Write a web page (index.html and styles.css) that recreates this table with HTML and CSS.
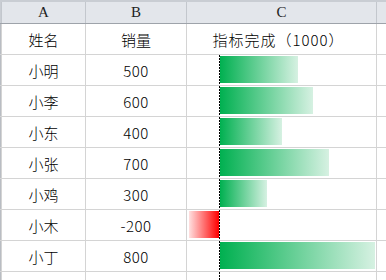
FILE: index.html
```html
<!DOCTYPE html>
<html lang="zh">
<head>
<meta charset="utf-8">
<link rel="stylesheet" href="styles.css">
</head>
<body>
<div class="sheet">
  <div class="colhead">
    <div class="edge"></div>
    <div class="hc">A</div>
    <div class="hc">B</div>
    <div class="hc">C</div>
    <div class="hc"></div>
  </div>
  <div class="grid">
    <div class="edge"></div><div class="cell name">姓名</div><div class="cell name">销量</div><div class="cell name title">指标完成（1000）</div><div class="cell"></div>

    <div class="edge"></div><div class="cell name">小明</div><div class="cell num">500</div>
    <div class="cell bars"><div class="neg"></div><div class="axis"></div><div class="pos"><div class="bar" style="width:78px"></div></div></div><div class="cell"></div>

    <div class="edge"></div><div class="cell name">小李</div><div class="cell num">600</div>
    <div class="cell bars"><div class="neg"></div><div class="axis"></div><div class="pos"><div class="bar" style="width:93px"></div></div></div><div class="cell"></div>

    <div class="edge"></div><div class="cell name">小东</div><div class="cell num">400</div>
    <div class="cell bars"><div class="neg"></div><div class="axis"></div><div class="pos"><div class="bar" style="width:62px"></div></div></div><div class="cell"></div>

    <div class="edge"></div><div class="cell name">小张</div><div class="cell num">700</div>
    <div class="cell bars"><div class="neg"></div><div class="axis"></div><div class="pos"><div class="bar" style="width:109px"></div></div></div><div class="cell"></div>

    <div class="edge"></div><div class="cell name">小鸡</div><div class="cell num">300</div>
    <div class="cell bars"><div class="neg"></div><div class="axis"></div><div class="pos"><div class="bar" style="width:47px"></div></div></div><div class="cell"></div>

    <div class="edge"></div><div class="cell name">小木</div><div class="cell num">-200</div>
    <div class="cell bars"><div class="neg"><div class="bar red" style="width:30px"></div></div><div class="axis"></div><div class="pos"></div></div><div class="cell"></div>

    <div class="edge"></div><div class="cell name">小丁</div><div class="cell num">800</div>
    <div class="cell bars"><div class="neg"></div><div class="axis"></div><div class="pos"><div class="bar" style="width:155px"></div></div></div><div class="cell"></div>

    <div class="edge"></div><div class="cell"></div><div class="cell"></div>
    <div class="cell bars"><div class="neg"></div><div class="axis"></div><div class="pos"></div></div><div class="cell"></div>
  </div>
</div>
</body>
</html>
```
FILE: styles.css
```css
html, body {
  margin: 0;
  padding: 0;
  background: #ffffff;
}
.sheet {
  width: 386px;
  height: 280px;
  overflow: hidden;
  font-family: "Noto Sans CJK SC", "DejaVu Sans", sans-serif;
  font-weight: 300;
  color: #000;
}
.colhead {
  display: grid;
  grid-template-columns: 1px 83px 100px 189px 9px;
  grid-template-rows: 21px;
  column-gap: 1px;
  background: #c3c7cd;
  border-top: 2px solid #c9cdd3;
  border-bottom: 1px solid #9ea3aa;
}
.colhead .edge {
  background: #c9cdd3;
}
.hc {
  background: #e3e6eb;
  font-family: "Liberation Serif", serif;
  font-weight: 400;
  font-size: 15px;
  line-height: 21px;
  text-align: center;
  color: #222;
}
.grid {
  display: grid;
  grid-template-columns: 1px 83px 100px 189px 9px;
  grid-template-rows: repeat(8, 30px) 8px;
  gap: 1px;
  background: #d4d4d4;
}
.grid .edge {
  background: #b9bdc3;
}
.cell {
  background: #fff;
  display: flex;
  align-items: center;
  justify-content: center;
  font-size: 15px;
  line-height: 1;
}
.num {
  font-size: 15px;
  letter-spacing: 0.5px;
}
.title {
  padding-right: 6px;
  letter-spacing: 1px;
}
.bars {
  align-items: stretch;
  justify-content: flex-start;
}
.neg {
  width: 32px;
  display: flex;
  justify-content: flex-end;
}
.axis {
  width: 1px;
  background: repeating-linear-gradient(to bottom, #000 0 2px, transparent 2px 3px);
}
.pos {
  flex: 1;
  display: flex;
}
.bar {
  margin: 1px 0 2px 0;
  background: linear-gradient(to right, #00b050, #d6f1e2);
}
.bar.red {
  background: linear-gradient(to right, #ffe0e0, #ff0000);
}
```
